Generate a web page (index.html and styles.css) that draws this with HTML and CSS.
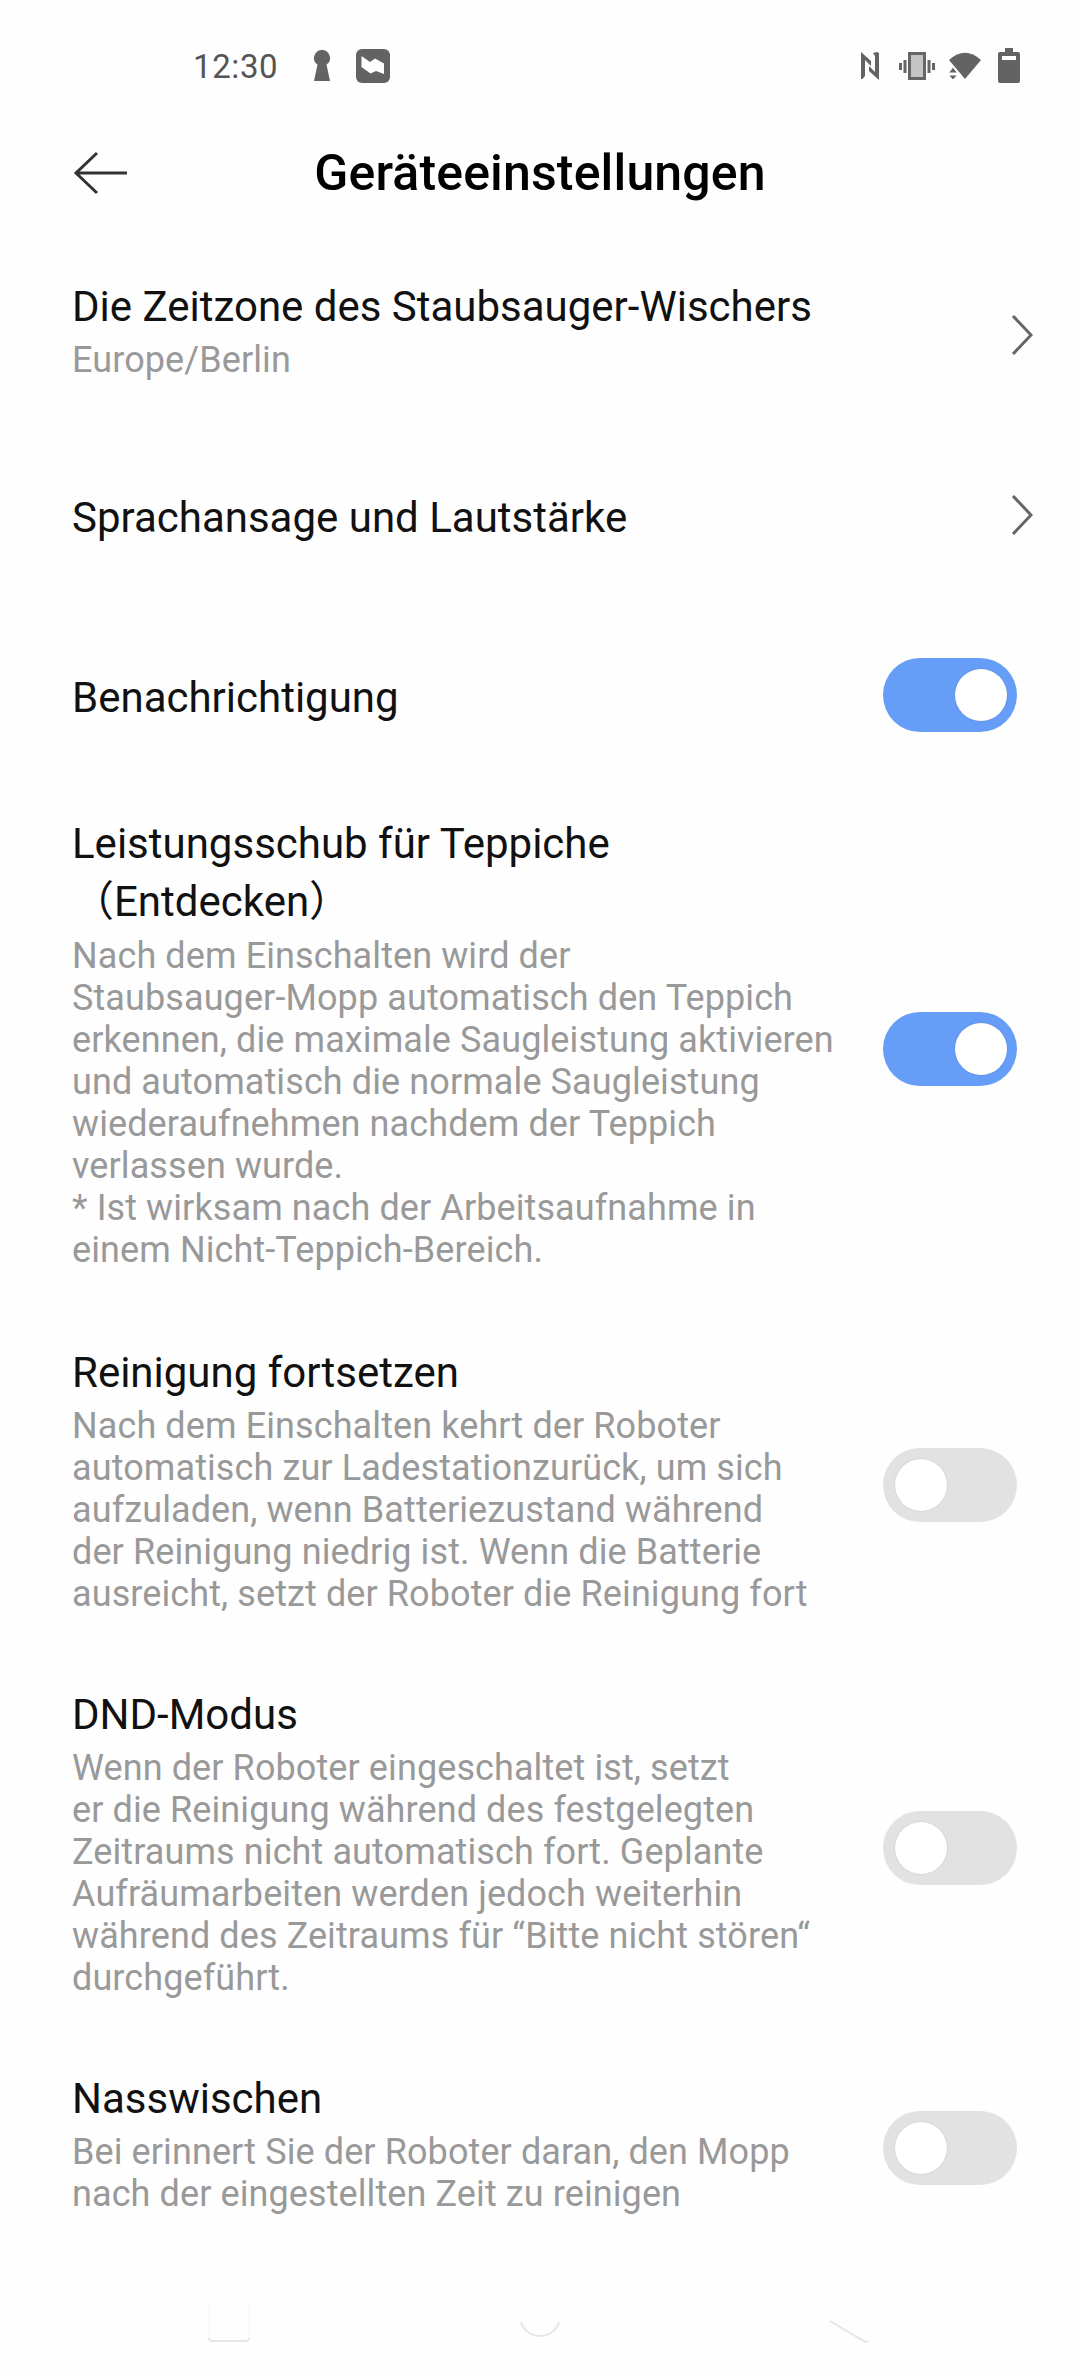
FILE: index.html
```html
<!DOCTYPE html>
<html lang="de">

<head>
    <meta charset="UTF-8">
    <meta name="viewport" content="width=device-width, initial-scale=1.0">
    <title>Geräteeinstellungen</title>
    <link rel="stylesheet" href="styles.css">
</head>

<body>
    <div class="status-bar">
        <span class="time">12:30</span>
        <svg class="icon-key" width="18" height="32" viewBox="0 0 18 32">
            <path d="M9 0a8 8 0 0 1 4.500 14.600L17 31H1l3.500-16.400A8 8 0 0 1 9 0z" />
        </svg>
        <svg class="icon-app" width="34" height="34" viewBox="0 0 34 34">
            <rect width="34" height="34" rx="6" />
            <path class="cut" d="M5.500 7l8.500 6 5-3.500 9 5v10.500l-8-3-5.500 2.500L5.500 18z" />
        </svg>
        <div class="status-right">
            <svg class="icon-nfc" width="18" height="28" viewBox="0 0 18 28">
                <path d="M0 0l10 9v5L4 8v16L1.500 27H0zM18 28L8 19v-5l6 6V4l-2-3 4-1 2 1z" />
            </svg>
            <svg class="icon-vibrate" width="36" height="28" viewBox="0 0 36 28">
                <rect x="10.500" y="1.500" width="15" height="25" fill="#c4c4c4" stroke="#666" stroke-width="3" />
                <path class="line" d="M6 8v13M1.500 11v7M30 8v13M34.500 11v7" />
            </svg>
            <svg class="icon-wifi" width="34" height="28" viewBox="0 0 34 28">
                <path d="M1 8Q17-6.500 33 8L17 27z" />
                <path class="arrows" d="M5 15l4.500 6H.5zM5 28l4.500-5H.5z" />
            </svg>
            <svg class="icon-battery" width="22" height="36" viewBox="0 0 22 36">
                <path d="M7 0h8v4h5a2 2 0 0 1 2 2v27a2 2 0 0 1-2 2H2a2 2 0 0 1-2-2V6a2 2 0 0 1 2-2h5z" />
                <path class="cut" d="M4 8h14v4H4z" />
            </svg>
        </div>
    </div>

    <div class="header">
        <svg class="back" width="54" height="44" viewBox="0 0 54 44">
            <path d="M24 2L3 22l21 20M3 22h51" />
        </svg>
        <h1>Geräteeinstellungen</h1>
    </div>

    <div class="settings">
        <div class="item">
            <div class="text">
                <h2>Die Zeitzone des Staubsauger-Wischers</h2>
                <p>Europe/Berlin</p>
            </div>
            <svg class="chevron" width="22" height="42" viewBox="0 0 22 42">
                <path d="M2 2l18 19L2 40" />
            </svg>
        </div>
        <div class="item single">
            <div class="text">
                <h2>Sprachansage und Lautstärke</h2>
            </div>
            <svg class="chevron" width="22" height="42" viewBox="0 0 22 42">
                <path d="M2 2l18 19L2 40" />
            </svg>
        </div>
        <div class="item single">
            <div class="text">
                <h2>Benachrichtigung</h2>
            </div>
            <div class="switch on"></div>
        </div>
        <div class="item carpet">
            <div class="text">
                <h2>Leistungsschub für Teppiche<br>（Entdecken）</h2>
                <p>Nach dem Einschalten wird der<br>Staubsauger-Mopp automatisch den Teppich<br>erkennen, die maximale Saugleistung aktivieren<br>und automatisch die normale Saugleistung<br>wiederaufnehmen nachdem der Teppich<br>verlassen wurde.<br>* Ist wirksam nach der Arbeitsaufnahme in<br>einem Nicht-Teppich-Bereich.</p>
            </div>
            <div class="switch on"></div>
        </div>
        <div class="item">
            <div class="text">
                <h2>Reinigung fortsetzen</h2>
                <p>Nach dem Einschalten kehrt der Roboter<br>automatisch zur Ladestationzurück, um sich<br>aufzuladen, wenn Batteriezustand während<br>der Reinigung niedrig ist. Wenn die Batterie<br>ausreicht, setzt der Roboter die Reinigung fort</p>
            </div>
            <div class="switch"></div>
        </div>
        <div class="item">
            <div class="text">
                <h2>DND-Modus</h2>
                <p>Wenn der Roboter eingeschaltet ist, setzt<br>er die Reinigung während des festgelegten<br>Zeitraums nicht automatisch fort. Geplante<br>Aufräumarbeiten werden jedoch weiterhin<br>während des Zeitraums für “Bitte nicht stören“<br>durchgeführt.</p>
            </div>
            <div class="switch"></div>
        </div>
        <div class="item">
            <div class="text">
                <h2>Nasswischen</h2>
                <p>Bei erinnert Sie der Roboter daran, den Mopp<br>nach der eingestellten Zeit zu reinigen</p>
            </div>
            <div class="switch"></div>
        </div>
    </div>

    <div class="nav-bar">
        <svg width="44" height="48" viewBox="0 0 44 48">
            <path class="faint" d="M1.500 4v34M42.500 4v34" />
            <path d="M2 38q0 3 3 3h34q3 0 3-3" />
        </svg>
        <svg width="44" height="48" viewBox="0 0 44 48">
            <path d="M3 22a19.500 18 0 0 0 38 0" />
        </svg>
        <svg width="44" height="48" viewBox="0 0 44 48">
            <path d="M2 21l34 20q4 2 4 0" />
        </svg>
    </div>
</body>

</html>
```

FILE: styles.css
```css
* {
    box-sizing: border-box;
    margin: 0;
    padding: 0;
}

body {
    width: 1080px;
    height: 2376px;
    display: flex;
    flex-direction: column;
    font-family: Roboto, "Noto Sans CJK SC", sans-serif;
    background: #fefefe;
    overflow: hidden;
}

svg {
    display: block;
    flex: none;
}

.status-bar {
    display: flex;
    align-items: center;
    height: 104px;
    padding: 28px 60px 0 193px;
    color: #555;
    fill: #636363;
}

.time {
    width: 118px;
    font-size: 33px;
    letter-spacing: 0.6px;
}

.icon-key {
    margin: 0 25px 0 2px;
}

.cut {
    fill: #fff;
}

.line {
    fill: none;
    stroke: #666;
    stroke-width: 3;
}

.status-right {
    display: flex;
    align-items: center;
    margin-left: auto;
}

.icon-vibrate {
    margin: 0 13px 0 20px;
}

.icon-battery {
    margin-left: 16px;
}

.arrows {
    stroke: #fff;
    stroke-width: 1;
}

.header {
    display: flex;
    align-items: center;
    height: 137px;
    padding: 0 73px;
}

.back,
.chevron {
    fill: none;
    stroke: #333;
    stroke-width: 3;
}

.header h1 {
    flex: 1;
    margin-right: 54px;
    text-align: center;
    font-size: 50px;
    font-weight: 500;
    letter-spacing: 0.15px;
    color: #000;
}

.settings {
    margin-top: 4px;
}

.item {
    display: flex;
    align-items: center;
    justify-content: space-between;
    padding: 34px 63px 34px 72px;
    min-height: 180px;
}

.text {
    padding-bottom: 7px;
    white-space: nowrap;
}

.single .text {
    padding: 4px 0 0;
}

.item h2 {
    font-size: 42px;
    font-weight: 400;
    line-height: 49px;
    color: #111;
}

.item p {
    margin-top: 8px;
    font-size: 36px;
    line-height: 42px;
    letter-spacing: 0.1px;
    color: #999;
}

.carpet {
    padding-top: 30px;
    padding-bottom: 36px;
}

.carpet h2 {
    line-height: 58px;
}

.carpet p {
    margin-top: 4px;
}

.carpet .switch {
    margin-top: 5px;
}

.chevron {
    stroke: #666;
    margin-right: -16px;
}

.switch {
    flex: none;
    width: 134px;
    height: 74px;
    padding: 11px 10px 11px 12px;
    border-radius: 37px;
    background: #e2e2e2;
}

.switch::before {
    content: "";
    display: block;
    width: 52px;
    height: 52px;
    border-radius: 50%;
    background: #fff;
    box-shadow: 0 0 2px rgba(0, 0, 0, 0.15);
}

.switch.on {
    background: #669df6;
}

.switch.on::before {
    margin-left: auto;
}

.nav-bar {
    display: flex;
    justify-content: space-between;
    margin-top: auto;
    padding: 0 208px 28px 207px;
    fill: none;
    stroke: #e6e6e6;
    stroke-width: 2;
}

.nav-bar .faint {
    stroke: #f8f8f8;
}
```
